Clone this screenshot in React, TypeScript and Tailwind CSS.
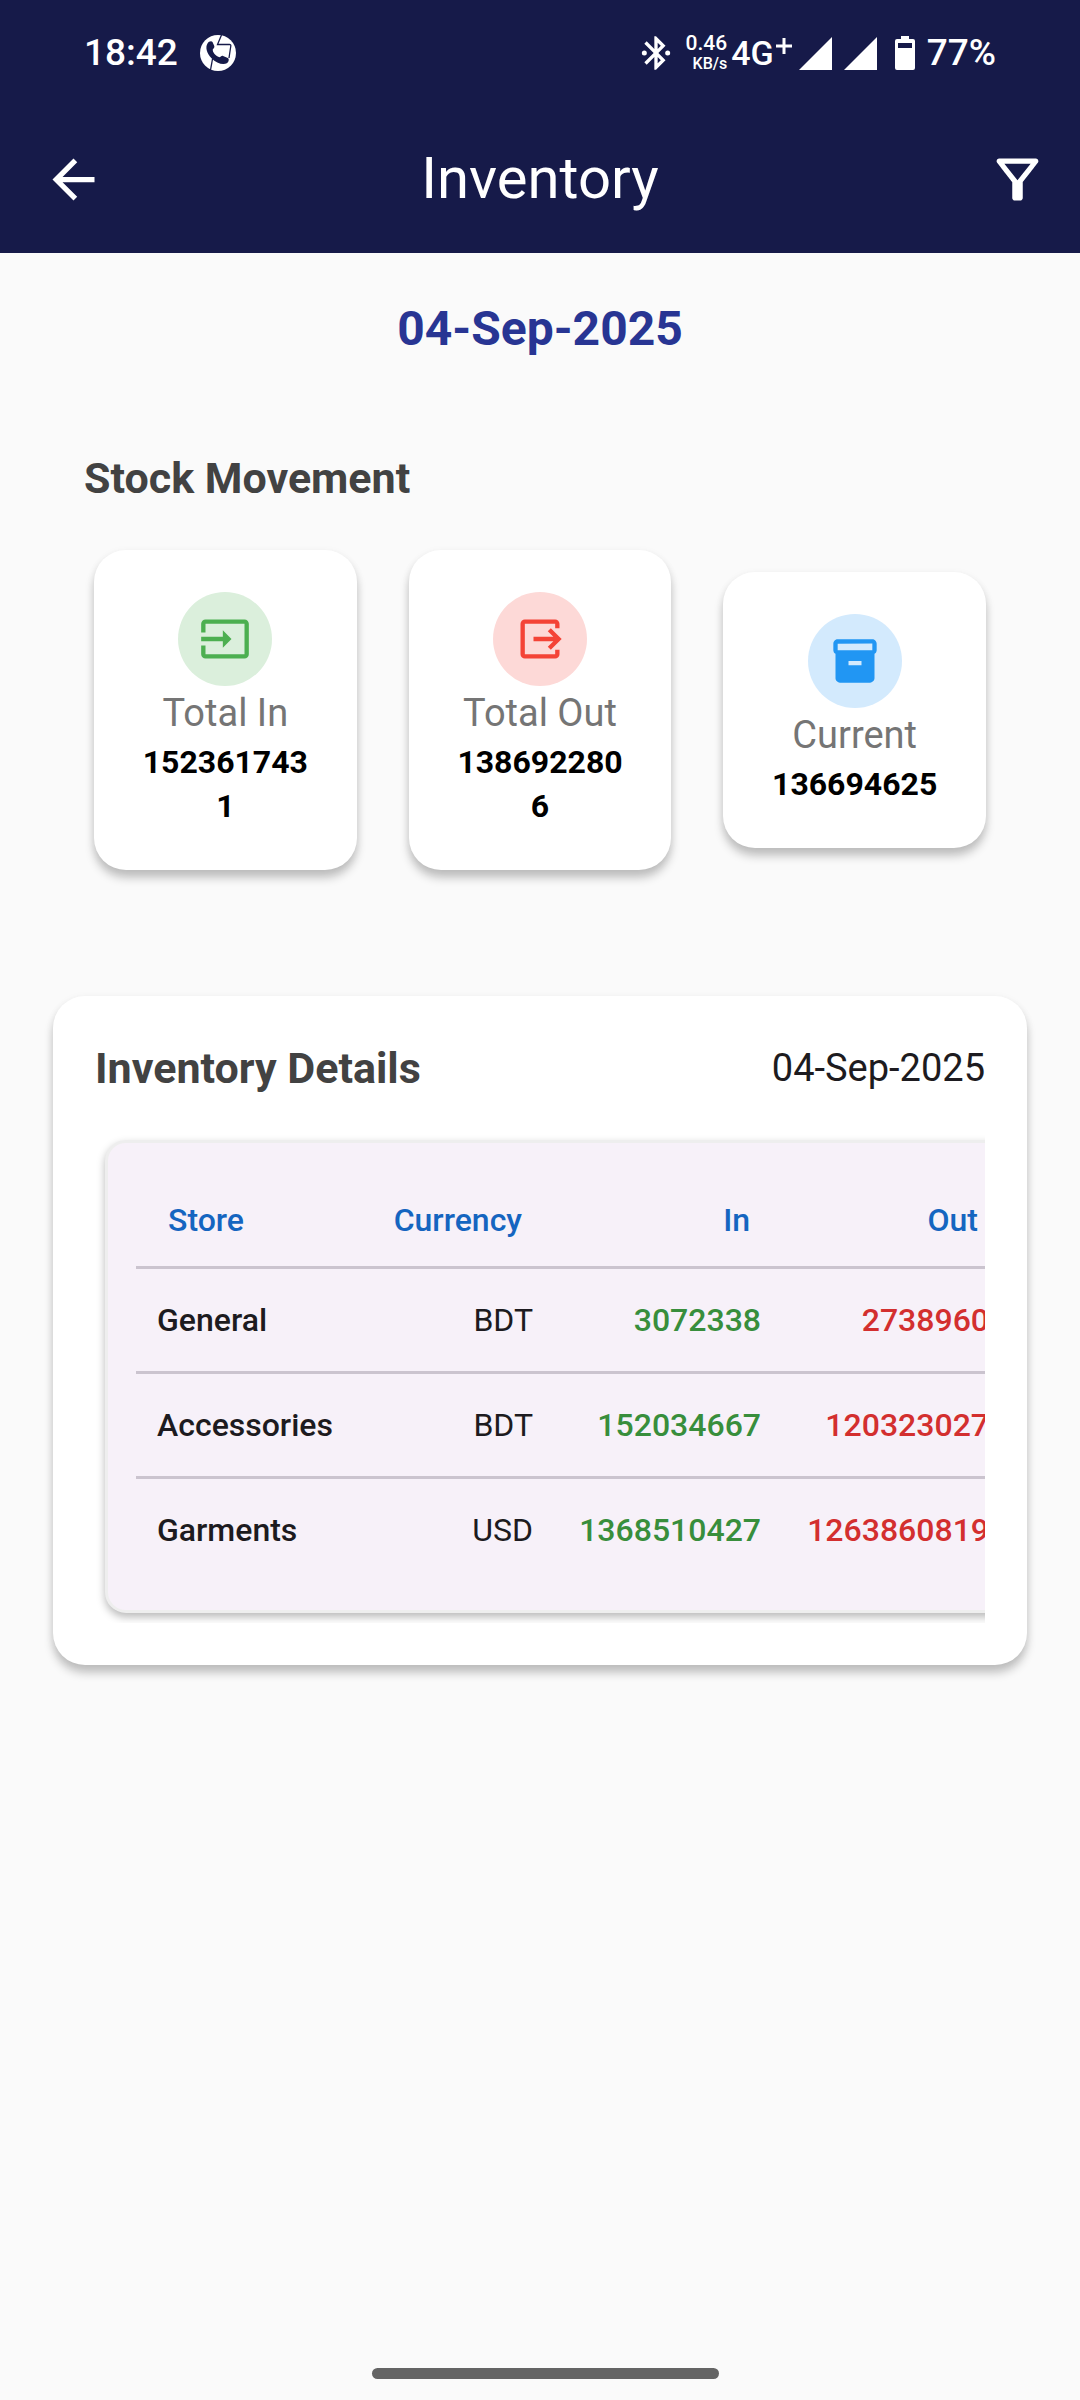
import React from "react";

const INPUT =
  "M21 3.01H3c-1.1 0-2 .9-2 2V9h2V4.99h18v14.03H3V15H1v4.01c0 1.1.9 1.98 2 1.98h18c1.1 0 2-.88 2-1.98v-14c0-1.11-.9-2-2-2zM11 16l4-4-4-4v3H1v2h10v3z";
const OUTPUT =
  "M17 17l5-5-5-5-1.41 1.41L18.17 11H9v2h9.17l-2.58 2.59L17 17zM19 19H5V5h14v2h2V5c0-1.1-.9-2-2-2H5c-1.1 0-2 .9-2 2v14c0 1.1.9 2 2 2h14c1.1 0 2-.9 2-2v-2h-2v2z";
const BOX =
  "M20 2H4c-1 0-2 .9-2 2v3.01c0 .72.43 1.34 1 1.69V20c0 1.1 1.1 2 2 2h14c.9 0 2-.9 2-2V8.7c.57-.35 1-.97 1-1.69V4c0-1.1-1-2-2-2zm-5 12H9v-2h6v2zm5-7H4V4l16-.02V7z";
const BACK =
  "M20 11H7.83l5.59-5.59L12 4l-8 8 8 8 1.41-1.41L7.83 13H20v-2z";
const FILTER =
  "M7 6h10l-5.01 6.3L7 6zm-2.75-.39C6.27 8.2 10 13 10 13v6c0 .55.45 1 1 1h2c.55 0 1-.45 1-1v-6s3.72-4.8 5.74-7.39c.51-.66.04-1.61-.79-1.61H5.04c-.83 0-1.3.95-.79 1.61z";
const BLUETOOTH =
  "M5 10.500a1.500 1.500 0 1 0 0 3a1.500 1.500 0 1 0 0-3zM19 10.500a1.500 1.500 0 1 0 0 3a1.500 1.500 0 1 0 0-3zM17.71 7.71L12 2h-1v7.59L6.41 5 5 6.41 10.59 12 5 17.59 6.41 19 11 14.41V22h1l5.71-5.71-4.3-4.29 4.3-4.29zM13 5.83l1.88 1.88L13 9.59V5.83zm1.88 10.46L13 18.17v-3.76l1.88 1.88z";

function Icon({ d, className }: { d: string; className: string }) {
  return (
    <svg viewBox="0 0 24 24" fill="currentColor" className={className} aria-hidden="true">
      <path d={d} />
    </svg>
  );
}

function CallAppIcon() {
  return (
    <svg viewBox="0 0 36 36" className="size-9" aria-hidden="true">
      <circle cx="18" cy="18" r="18" fill="#fff" />
      <g fill="none" stroke="#161a49" strokeWidth="1.3">
        <path d="M21.5 0L17.5 9.5H29.500Q31 9.500 30.800 11L29 23" />
        <path d="M12.5 24L10.5 35" />
      </g>
      <path
        d="M7.5 8.5c1-2 4-3 5-1.500l1.800 4c.3 1.200-.3 2.300-1.500 3.300-.4 3 2.800 7 7 8 1.200-1.300 2.300-1.800 3.300-1.300l4.700 2c1.800 1 .8 4.300-1 5.300-3.200 1.800-10.500.5-15.300-5-5-5.200-6.300-11.200-4-14.800z"
        fill="#161a49"
      />
    </svg>
  );
}

function Signal() {
  return (
    <svg viewBox="0 0 33 33" className="size-[33px]" aria-hidden="true">
      <path d="M33 0V33H0z" fill="#fff" />
    </svg>
  );
}

function StatusBar() {
  return (
    <div className="flex h-[106px] items-center justify-between px-[84px] font-medium">
      <div className="flex items-center gap-[22px]">
        <span className="text-[37px] leading-[44px]">18:42</span>
        <CallAppIcon />
      </div>
      <div className="flex items-center">
        <Icon d={BLUETOOTH} className="mr-[10px] size-10" />
        <div className="mr-1 flex flex-col items-end">
          <span className="text-[21px] leading-[22px]">0.46</span>
          <span className="text-[16px] leading-[20px]">KB/s</span>
        </div>
        <span className="text-[34px] leading-[44px]">4G</span>
        <svg viewBox="0 0 16 16" className="mt-[-14px] mr-[7px] ml-[2px] size-4" aria-hidden="true">
          <path d="M8 0V16M0 8H16" stroke="#fff" strokeWidth="3" />
        </svg>
        <Signal />
        <div className="w-3" />
        <Signal />
        <svg viewBox="0 0 20 34" className="mr-3 ml-[18px] h-[34px] w-5" aria-hidden="true">
          <path
            fillRule="evenodd"
            fill="#fff"
            d="M6 0h8v3h4a2 2 0 0 1 2 2v27a2 2 0 0 1-2 2H2a2 2 0 0 1-2-2V5a2 2 0 0 1 2-2h4zM3 7v5h14V7z"
          />
        </svg>
        <span className="text-[37px] leading-[44px]">77%</span>
      </div>
    </div>
  );
}

type Stat = { label: string; value: string; icon: string; tint: string };

const STATS: Stat[] = [
  { label: "Total In", value: "1523617431", icon: INPUT, tint: "bg-[#dbefdc] text-[#4caf50]" },
  { label: "Total Out", value: "1386922806", icon: OUTPUT, tint: "bg-[#fdd9d7] text-[#f44336]" },
  { label: "Current", value: "136694625", icon: BOX, tint: "bg-[#d3eafd] text-[#2196f3]" },
];

function StatCard({ label, value, icon, tint }: Stat) {
  return (
    <div className="flex flex-col items-center rounded-[32px] bg-white p-[42px] shadow-[0_8px_10px_rgba(0,0,0,0.22),0_2px_8px_rgba(0,0,0,0.06)]">
      <div className={`flex size-[94px] items-center justify-center rounded-full ${tint}`}>
        <Icon d={icon} className="size-[52px]" />
      </div>
      <div className="text-[38px] leading-[54px] whitespace-nowrap text-[#757575]">{label}</div>
      <div className="w-full text-center text-[32px] leading-[44px] font-bold break-all text-black">
        {value}
      </div>
    </div>
  );
}

const ROWS = [
  { store: "General", currency: "BDT", in: "3072338", out: "2738960" },
  { store: "Accessories", currency: "BDT", in: "152034667", out: "120323027" },
  { store: "Garments", currency: "USD", in: "1368510427", out: "1263860819" },
];

function DetailsTable() {
  return (
    <table className="w-[874px] table-fixed border-collapse text-[32px] leading-[44px] text-[#1d1b20]">
      <thead>
        <tr className="h-[93px] text-[#1565c0]">
          <th scope="col" className="w-[238px] px-8 text-left font-medium">Store</th>
          <th scope="col" className="w-[180px] px-8 font-medium">
            <div className="flex justify-end">Currency</div>
          </th>
          <th scope="col" className="w-[228px] px-8 text-right font-medium">In</th>
          <th scope="col" className="w-[228px] px-8 text-right font-medium">Out</th>
        </tr>
      </thead>
      <tbody>
        {ROWS.map((r) => (
          <tr key={r.store} className="h-[105px] border-t-[3px] border-[#cbc4cf]">
            <td className="px-[21px] font-medium">{r.store}</td>
            <td className="px-[21px] text-right">{r.currency}</td>
            <td className="px-[21px] text-right font-medium text-[#388e3c]">{r.in}</td>
            <td className="px-[21px] text-right font-medium text-[#d32f2f]">{r.out}</td>
          </tr>
        ))}
      </tbody>
    </table>
  );
}

export default function App() {
  return (
    <div className="flex min-h-screen flex-col bg-[#fafafa] font-[Roboto,sans-serif]">
      <header className="bg-[#161a49] text-white">
        <StatusBar />
        <div className="flex h-[147px] items-center justify-between pr-[31px] pl-[42px]">
          <button type="button" aria-label="Back">
            <Icon d={BACK} className="size-[63px]" />
          </button>
          <h1 className="flex-1 pr-[11px] pb-1 text-center text-[58px] leading-[70px]">Inventory</h1>
          <button type="button" aria-label="Filter">
            <Icon d={FILTER} className="size-[63px]" />
          </button>
        </div>
      </header>

      <main className="flex-1">
        <p className="pt-[42px] text-center text-[48px] leading-[68px] font-bold text-[#283593]">
          04-Sep-2025
        </p>

        <section>
          <h2 className="px-[84px] pt-[85px] text-[43px] leading-[60px] font-bold text-[#424242]">
            Stock Movement
          </h2>
          <div className="grid grid-cols-3 items-center gap-[52px] px-[94px] pt-[42px]">
            {STATS.map((s) => (
              <StatCard key={s.label} {...s} />
            ))}
          </div>
        </section>

        <section className="mx-[53px] mt-[126px] rounded-[32px] bg-white p-[42px] shadow-[0_8px_10px_rgba(0,0,0,0.22),0_2px_8px_rgba(0,0,0,0.06)]">
          <div className="flex items-center justify-between leading-[60px]">
            <h2 className="text-[43px] font-bold text-[#424242]">Inventory Details</h2>
            <span className="text-[38px] text-[#1d1b20]">04-Sep-2025</span>
          </div>
          <div className="mt-8 overflow-x-auto [scrollbar-width:none]">
            <div className="m-[10px] w-max rounded-[21px] border-[3px] border-[#eeeeee] bg-[#f7f1f9] px-7 pt-[31px] pb-7 shadow-[0_4px_8px_rgba(0,0,0,0.28)]">
              <DetailsTable />
            </div>
          </div>
        </section>
      </main>

      <footer className="flex justify-center pb-[21px] pl-[10px]">
        <div className="h-[11px] w-[347px] rounded-full bg-[#646464]" />
      </footer>
    </div>
  );
}
